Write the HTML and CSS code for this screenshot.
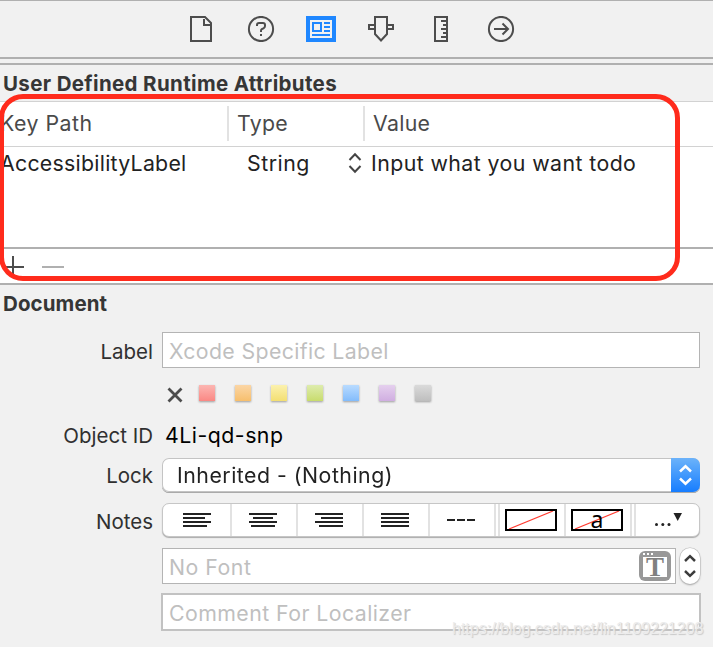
FILE: index.html
```html
<!DOCTYPE html>
<html lang="en">
<head>
<meta charset="utf-8">
<title>Identity Inspector</title>
<link rel="stylesheet" href="styles.css">
</head>
<body>
<main class="inspector">
  <nav class="toolbar">
    <svg class="tool" width="30" height="26" viewBox="0 0 30 26"><path d="M5 1H19L25 7V25H5Z"/><path d="M18 3V9H24"/></svg>
    <svg class="tool" width="30" height="26" viewBox="0 0 30 26"><circle cx="15" cy="13" r="12.1"/><path d="M11 10V9Q11 7 13 7H17Q19 7 19 9V10Q19 11.5 17.5 12.3L15.8 13.2Q15 13.7 15 15V16M15 18V20"/></svg>
    <svg class="tool tool-active" width="30" height="26" viewBox="0 0 30 26"><rect class="fill" width="30" height="26"/><path class="paper" d="M4 4H26V22H4Z"/><path d="M7 7H15V15H7ZM18 7H24M18 11H24M18 15H24M6 19H24"/></svg>
    <svg class="tool" width="30" height="26" viewBox="0 0 30 26"><path d="M9 1H21V18L15 24.5L9 18ZM9 9H3V13H9M21 9H27V13H21"/></svg>
    <svg class="tool" width="30" height="26" viewBox="0 0 30 26"><path d="M9 1H21V25H9ZM15 5H21M17 9H21M15 13H21M17 17H21M15 21H21"/></svg>
    <svg class="tool" width="30" height="26" viewBox="0 0 30 26"><circle cx="15" cy="13" r="12.1"/><path d="M8 13H22M16.5 7.5L22 13L16.5 18.5"/></svg>
  </nav>
  <div class="gap-bar"></div>
  <section class="attributes">
    <h2 class="heading"><span class="t-title">User Defined Runtime Attributes</span></h2>
    <div class="columns head">
      <span class="t-key">Key Path</span>
      <span class="cell-type">Type</span>
      <span class="cell-value">Value</span>
    </div>
    <div class="columns row">
      <span class="t-access">AccessibilityLabel</span>
      <span class="cell-string"><span class="t-wide">String</span>
        <svg class="updown" width="14" height="22" viewBox="0 0 14 22"><path d="M1.5 8L7 2.2L12.5 8M1.5 14L7 19.8L12.5 14"/></svg></span>
      <span class="cell-input t-medium">Input what you want todo</span>
    </div>
    <div class="footer">
      <svg width="70" height="34" viewBox="0 0 70 34"><path class="plus" d="M2 18H24M13 7V29"/><path class="minus" d="M42 18H64"/></svg>
    </div>
    <div class="highlight"></div>
  </section>
  <section class="document">
    <h2 class="heading"><span class="t-doc">Document</span></h2>
    <div class="form">
      <label class="name r-label">Label</label>
      <div class="field r-label"><span class="t-xcode">Xcode Specific Label</span></div>

      <div class="swatches">
        <svg class="clear" width="16" height="16" viewBox="0 0 16 16"><path d="M1.5 1.5L14.5 14.5M14.5 1.5L1.5 14.5"/></svg>
        <i class="swatch red"></i><i class="swatch orange"></i><i class="swatch yellow"></i><i class="swatch green"></i><i class="swatch blue"></i><i class="swatch purple"></i><i class="swatch gray"></i>
      </div>

      <span class="name r-id">Object ID</span>
      <div class="object-id r-id"><span class="t-wide">4Li-qd-snp</span></div>

      <span class="name r-lock">Lock</span>
      <div class="select r-lock"><span class="t-wide">Inherited - (Nothing)</span>
        <span class="select-button"><svg width="29" height="34" viewBox="0 0 29 34"><path d="M9 13.5L14.5 8.3L20 13.5M9 20.5L14.5 25.7L20 20.5"/></svg></span></div>

      <span class="name r-notes">Notes</span>
      <div class="segments r-notes">
        <span class="seg first"><svg width="28" height="14" viewBox="0 0 28 14"><path d="M0 1H28M0 5H22M0 9H28M0 13H24"/></svg></span>
        <span class="seg"><svg width="28" height="14" viewBox="0 0 28 14"><path d="M0 1H28M4 5H24M0 9H28M2 13H26"/></svg></span>
        <span class="seg"><svg width="28" height="14" viewBox="0 0 28 14"><path d="M0 1H28M6 5H28M0 9H28M4 13H28"/></svg></span>
        <span class="seg"><svg width="28" height="14" viewBox="0 0 28 14"><path d="M0 1H28M0 5H28M0 9H28M0 13H28"/></svg></span>
        <span class="seg"><svg width="28" height="14" viewBox="0 0 28 14"><path d="M0 7H8M10 7H18M20 7H28"/></svg></span>
        <span class="divider"></span>
        <span class="seg"><span class="color-well"><svg width="48" height="18" viewBox="0 0 48 18"><path d="M2 18L46 0"/></svg></span></span>
        <span class="seg"><span class="color-well"><svg width="48" height="18" viewBox="0 0 48 18"><path d="M2 18L46 0"/></svg><b class="letter">a</b></span></span>
        <span class="divider"></span>
        <span class="seg last"><svg class="more" width="28" height="18" viewBox="0 0 28 18"><path d="M18.5 2H27L22.7 10Z"/><circle cx="1.5" cy="13.5" r="1.5"/><circle cx="7.8" cy="13.5" r="1.5"/><circle cx="14" cy="13.5" r="1.5"/></svg></span>
      </div>

      <div class="font-row">
        <div class="field"><span class="t-wide">No Font</span>
          <span class="font-button"><i></i><i></i><i></i><b>T</b></span></div>
        <span class="stepper"><svg width="20" height="36" viewBox="0 0 20 36"><path d="M5 13L10 8.2L15 13M5 23L10 27.8L15 23"/></svg></span>
      </div>

      <div class="field comment"><span class="t-medium">Comment For Localizer</span></div>
    </div>
  </section>
  <div class="watermark">https://blog.csdn.net/lin1109221208</div>
</main>
</body>
</html>
```
FILE: styles.css
```css
* { box-sizing: border-box; }
body { margin: 0; background: #f1f1f1; color: #222; font: 21.3px/26px Inter, "Liberation Sans", sans-serif; }
.inspector { position: relative; height: 647px; overflow: hidden; white-space: nowrap; }
svg { display: block; fill: none; stroke-width: 2; flex: none; }

.t-title { letter-spacing: .35px; }
.t-doc { letter-spacing: .1px; }
.t-key { letter-spacing: .5px; }
.t-access { letter-spacing: .27px; }
.t-xcode { letter-spacing: .36px; }
.t-medium { letter-spacing: .43px; }
.t-wide { letter-spacing: .5px; }

.toolbar { display: flex; gap: 30px; height: 59px; padding: 15px 0 0 186px; border-top: 1px solid #b0b0b0; border-bottom: 2px solid #b0b0b0; }
.tool { stroke: #4d4d4d; }
.tool-active { stroke: #1f87ff; }
.tool-active .fill { fill: #1f87ff; stroke: none; }
.tool-active .paper { fill: #f1f1f1; stroke: none; }
.gap-bar { height: 6px; border-bottom: 2px solid #b0b0b0; }

.attributes { position: relative; height: 220px; background: #fff; border-bottom: 2px solid #b0b0b0; }
.heading { margin: 0; padding: 6px 0 0 3px; height: 36px; background: #f1f1f1; color: #363636; font-size: 20.5px; font-weight: 700; line-height: 26px; }
.columns { display: grid; grid-template-columns: 227px 136px 1fr; }
.head { height: 46px; padding: 4px 0; border-top: 1px solid #d2d2d2; border-bottom: 1px solid #d2d2d2; color: #4a4a4a; line-height: 34px; }
.cell-type, .cell-value { border-left: 2px solid #e2e2e2; padding-left: 8px; height: 35px; letter-spacing: .3px; }
.row { height: 100px; padding-top: 3px; line-height: 26px; }
.cell-string { display: flex; justify-content: space-between; padding-left: 20px; margin-right: 1px; }
.updown { stroke: #444; margin-top: 2px; }
.cell-input { padding-left: 8px; }
.footer { height: 36px; border-top: 2px solid #b0b0b0; }
.plus { stroke: #4d4d4d; }
.minus { stroke: #b0b0b0; }
.highlight { position: absolute; left: -1px; top: 29px; width: 681px; height: 187px; border: 5px solid #ff2b1c; border-radius: 24px; }

.form { display: grid; grid-template-columns: 153px 538px; column-gap: 9px; padding-top: 11px; }
.name { text-align: right; color: #303030; font-size: 20.5px; }
.field { display: flex; align-items: center; justify-content: space-between; height: 36px; padding: 2px 4px 0 6px; background: #fff; border: 1px solid #b4b4b4; color: #bfbfbf; }
.name.r-label { padding-top: 7px; }
.swatches { grid-column: 2; display: flex; gap: 20px; height: 55px; padding: 19px 0 0 5px; }
.clear { stroke: #4d4d4d; stroke-width: 2.8; margin-right: -4px; }
.swatch { width: 16px; height: 16px; margin-top: -2px; box-shadow: 0 1px 2px rgba(0,0,0,.35); }
.red { background: linear-gradient(#fcb6b2, #fa8884); }
.orange { background: linear-gradient(#fbd6a6, #f7bf6d); }
.yellow { background: linear-gradient(#fbf1ae, #f3df72); }
.green { background: linear-gradient(#deecae, #c8dc6d); }
.blue { background: linear-gradient(#b9dbff, #83bcfb); }
.purple { background: linear-gradient(#e5d0ee, #d0aee1); }
.gray { background: linear-gradient(#dadada, #bebebe); }
.r-id { height: 35px; }
.object-id { padding-left: 3px; color: #000; line-height: 24px; }
.r-lock { height: 45px; }
.name.r-lock { padding-top: 5px; }
.select { display: flex; justify-content: space-between; align-items: center; height: 34px; padding-left: 15px; background: #fff; border-radius: 7px; overflow: hidden; box-shadow: inset 0 0 0 1px #c4c4c4; filter: drop-shadow(0 1px 0.5px #aaa); }
.select-button { width: 29px; background: linear-gradient(#6cb3fa, #167dff); }
.select-button svg { stroke: #fff; stroke-width: 2.5; }
.name.r-notes { padding-top: 6px; }
.segments { display: flex; height: 34px; background: #fff; border: 1px solid #c6c6c6; border-radius: 7px; box-shadow: 0 1px 1px #aaa; }
.seg { width: 66px; display: flex; align-items: center; justify-content: center; padding-right: 2px; border-right: 2px solid #e2e2e2; stroke: #222; }
.seg.first { width: 69px; padding-right: 0; }
.seg.last { flex: 1; border: 0; padding: 0 0 0 2px; }
.divider { width: 4px; border-right: 2px solid #e2e2e2; }
.color-well { position: relative; width: 52px; height: 22px; border: 2px solid #000; }
.color-well svg { stroke: #ff3b30; stroke-width: 1.2; }
.letter { position: absolute; inset: 0; text-align: center; font: 400 23px/17px "Noto Sans", sans-serif; color: #000; }
.more { fill: #222; stroke: none; }
.font-row { grid-column: 2; display: flex; gap: 4px; margin-top: 11px; }
.font-row .field { width: 514px; padding-top: 0; }
.font-row .t-wide { padding-top: 2px; }
.font-button { display: flex; gap: 2px; position: relative; width: 32px; height: 30px; padding: 2px 4px; border-radius: 6px; background: #989898; }
.font-button i { width: 2px; height: 2px; background: #fff; }
.font-button b { position: absolute; left: 4px; right: 4px; top: 6px; bottom: 4px; background: #fff; color: #808080; font: 700 27px/20px "Liberation Serif", serif; text-align: center; }
.stepper { width: 20px; height: 36px; border-radius: 10px; background: #fff; box-shadow: 0 0 0 .5px #bbb, 0 1px 2px #999; }
.stepper svg { stroke: #3c3c3c; stroke-width: 2.5; }
.comment { grid-column: 2; width: 540px; height: 38px; margin: 9px 0 0 -1px; border: 2px solid #c2c2c2; }
.watermark { position: absolute; left: 452px; top: 619px; color: #ececec; font: 16px/20px "Liberation Sans", sans-serif; text-shadow: 1px 1px 1px #c8c8c8; }
```
